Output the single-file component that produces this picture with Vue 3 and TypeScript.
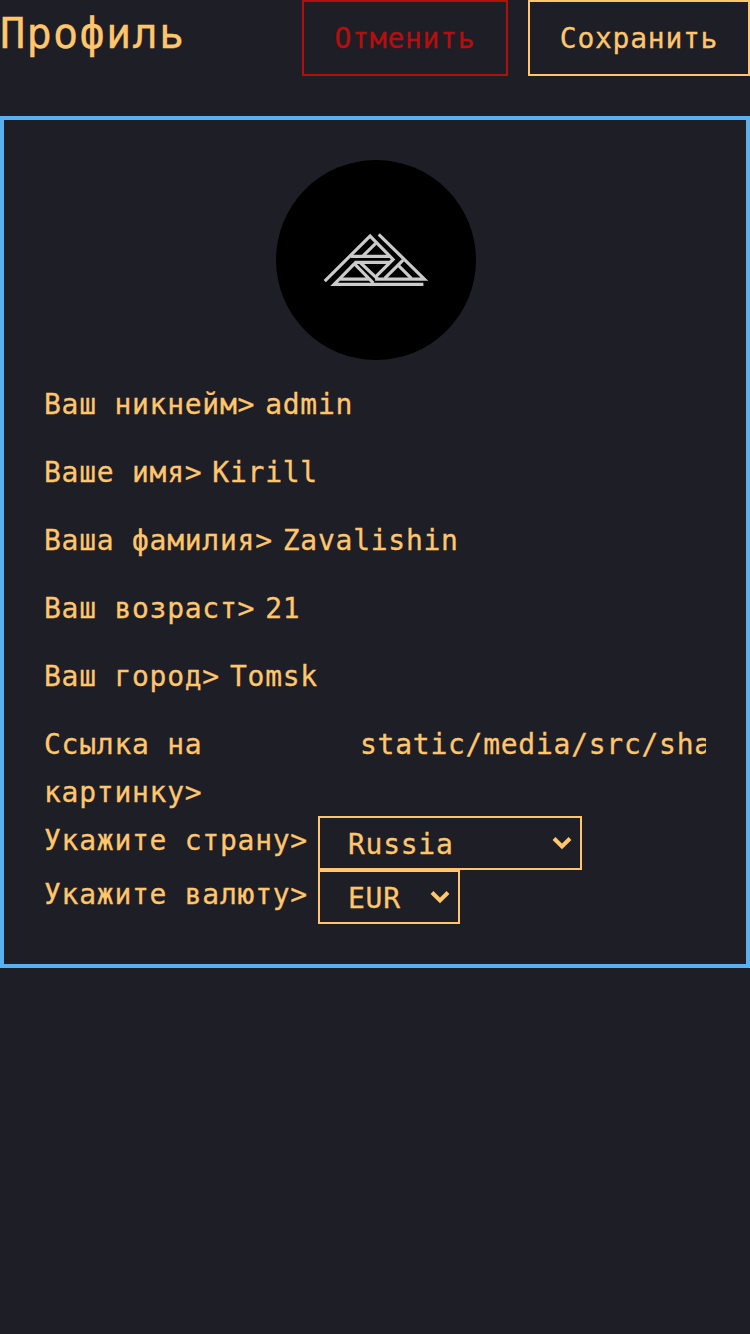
<script setup lang="ts">
import { ref } from 'vue'

interface Field {
  label: string
  value: string
  wide?: boolean
}

interface Choice {
  label: string
  value: string
  size: string
}

const fields = ref<Field[]>([
  { label: 'Ваш никнейм>', value: 'admin' },
  { label: 'Ваше имя>', value: 'Kirill' },
  { label: 'Ваша фамилия>', value: 'Zavalishin' },
  { label: 'Ваш возраст>', value: '21' },
  { label: 'Ваш город>', value: 'Tomsk' },
  { label: 'Ссылка на картинку>', value: 'static/media/src/sha', wide: true },
])

const choices = ref<Choice[]>([
  { label: 'Укажите страну>', value: 'Russia', size: 'country' },
  { label: 'Укажите валюту>', value: 'EUR', size: 'currency' },
])
</script>

<template>
  <main class="page">
    <header class="header">
      <h1 class="title">Профиль</h1>
      <div class="actions">
        <button class="btn cancel" type="button">Отменить</button>
        <button class="btn save" type="button">Сохранить</button>
      </div>
    </header>

    <section class="card">
      <div class="avatar">
        <svg viewBox="0 0 200 200" width="200" height="200">
          <g transform="translate(33.4 60.4) scale(0.33333)" fill="none" stroke="#cbcbcb" stroke-width="9.5">
            <path d="M46 182 L182 47 L251 117 L200 168" />
            <path d="M124 108 H243 M160 107 L199 69" />
            <path d="M208 42 L345 176 H197" />
            <path d="M342 192 H74 L139 126 H243" />
            <path d="M92 176 H178 M134 129 L192 188 M153 127 L206 177" />
            <path d="M281 119 L226 174 M266 134 L306 174" />
          </g>
        </svg>
      </div>

      <div v-for="field in fields" :key="field.label" class="row" :class="{ wide: field.wide }">
        <span class="label">{{ field.label }}</span>
        <span class="value">{{ field.value }}</span>
      </div>

      <div v-for="choice in choices" :key="choice.label" class="choice">
        <span class="label">{{ choice.label }}</span>
        <div class="select" :class="choice.size">
          <span>{{ choice.value }}</span>
          <svg class="chevron" viewBox="0 0 20 14" width="20" height="14">
            <path d="M2 2.5 L10 10.5 L18 2.5" fill="none" stroke="#ffc66d" stroke-width="4" />
          </svg>
        </div>
      </div>
    </section>
  </main>
</template>

<style>
body {
  background: #1e1e26;
}
</style>

<style scoped>
.page {
  min-height: 1334px;
  background: #1e1e26;
  color: #ffc66d;
  font-family: "DejaVu Sans Mono", "Liberation Mono", monospace;
  font-size: 28px;
  line-height: 48px;
  letter-spacing: 0.738px;
  -webkit-text-stroke: 0.3px currentColor;
  overflow: hidden;
}

.header {
  display: flex;
  justify-content: space-between;
  align-items: flex-start;
  height: 76px;
  margin-bottom: 40px;
}

.title {
  margin: 0;
  font-size: 42px;
  font-weight: 400;
  line-height: 67px;
  letter-spacing: 1.2px;
}

.actions {
  display: flex;
  gap: 20px;
}

.btn {
  box-sizing: border-box;
  height: 76px;
  padding: 2px 0 0;
  border: 2px solid currentColor;
  background: none;
  color: inherit;
  font: inherit;
  line-height: 70px;
  letter-spacing: inherit;
  text-align: center;
}

.cancel {
  width: 206px;
  color: #b40f0f;
}

.save {
  width: 222px;
}

.card {
  box-sizing: border-box;
  height: 852px;
  padding: 40px;
  border: 4px solid #59b1ef;
}

.avatar {
  width: 200px;
  height: 200px;
  margin: 0 0 20px 232px;
  border-radius: 50%;
  background: #000;
  overflow: hidden;
}

.avatar svg {
  display: block;
}

.row {
  display: flex;
  gap: 10px;
  height: 48px;
  margin-bottom: 20px;
}

.label,
.value {
  padding-top: 1px;
}

.wide {
  gap: 0;
  height: 96px;
  margin-bottom: 0;
}

.wide .label {
  flex: 0 0 316px;
  padding-right: 110px;
  box-sizing: border-box;
}

.value {
  flex: 1;
  min-width: 0;
  overflow: hidden;
  white-space: nowrap;
}

.choice {
  display: flex;
  gap: 10px;
  height: 54px;
}

.select {
  display: flex;
  justify-content: space-between;
  align-items: flex-start;
  box-sizing: border-box;
  height: 54px;
  padding: 3px 8px 0 28px;
  border: 2px solid currentColor;
}

.country {
  width: 264px;
}

.currency {
  width: 142px;
}

.chevron {
  margin-top: 15px;
}
</style>
